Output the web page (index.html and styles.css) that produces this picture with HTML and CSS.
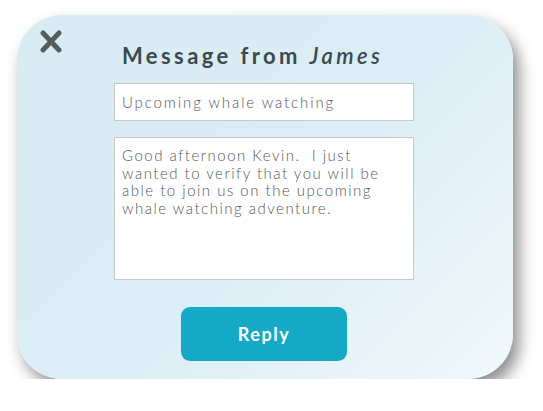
FILE: index.html
```html
<!DOCTYPE html>
<html lang="en">

<head>
    <meta charset="UTF-8">
    <meta name="viewport" content="width=device-width, initial-scale=1.0">
    <title>Message from James</title>
    <link rel="stylesheet" href="styles.css">
</head>

<body>
    <div class="message-card">
        <button class="close-btn" aria-label="Close">
            <svg width="22" height="23" viewBox="0 0 22 23">
                <path d="M3 3 L19 20 M19 3 L3 20" stroke="#545d5d" stroke-width="5" stroke-linecap="round" fill="none" />
            </svg>
        </button>

        <div class="message-form">
            <h1>Message from <em>James</em></h1>
            <input type="text" class="subject" value="Upcoming whale watching">
            <textarea class="body-text">Good afternoon Kevin.  I just
wanted to verify that you will be
able to join us on the upcoming
whale watching adventure.</textarea>
            <button class="reply-btn">Reply</button>
        </div>
    </div>
</body>

</html>
```

FILE: styles.css
```css
body {
    font-family: Lato, "Noto Sans", sans-serif;
    background-color: #fff;
    margin: 0;
    overflow: hidden;
}

.message-card {
    display: flex;
    margin: 15px 0 0 17px;
    width: 496px;
    height: 364px;
    box-sizing: border-box;
    padding: 15px 0 0 23px;
    border-radius: 45px;
    background: linear-gradient(135deg, #d8ebf2 0%, #dceef5 55%, #f1f8fb 100%);
    box-shadow: 6px 9px 16px rgba(0, 0, 0, 0.45);
}

.close-btn {
    width: 22px;
    height: 23px;
    padding: 0;
    border: none;
    background: none;
    cursor: pointer;
}

.close-btn svg {
    display: block;
}

.message-form {
    display: flex;
    flex-direction: column;
    width: 300px;
    margin-left: 52px;
}

h1 {
    margin: 12px 0 0 8px;
    font-size: 22px;
    line-height: 28px;
    font-weight: 700;
    letter-spacing: 3.4px;
    color: #3c494e;
    white-space: nowrap;
}

h1 em {
    font-weight: 600;
}

.subject,
.body-text {
    font-family: Lato, "Noto Sans", sans-serif;
    font-size: 15px;
    font-weight: 300;
    color: #55595b;
    background: #fff;
    border: 1px solid #c6c8c9;
    box-sizing: border-box;
    width: 300px;
    outline: none;
}

.subject {
    margin-top: 13px;
    height: 38px;
    padding: 0 7px;
    letter-spacing: 1.9px;
}

.body-text {
    margin-top: 16px;
    height: 143px;
    padding: 9px 7px;
    line-height: 17.5px;
    letter-spacing: 1.5px;
    resize: none;
    overflow: hidden;
}

.reply-btn {
    align-self: center;
    margin-top: 27px;
    width: 166px;
    height: 54px;
    border: none;
    border-radius: 9px;
    background-color: #15a9c8;
    color: #fff;
    font-family: Lato, "Noto Sans", sans-serif;
    font-size: 18px;
    font-weight: 700;
    letter-spacing: 1.5px;
    cursor: pointer;
}
```
